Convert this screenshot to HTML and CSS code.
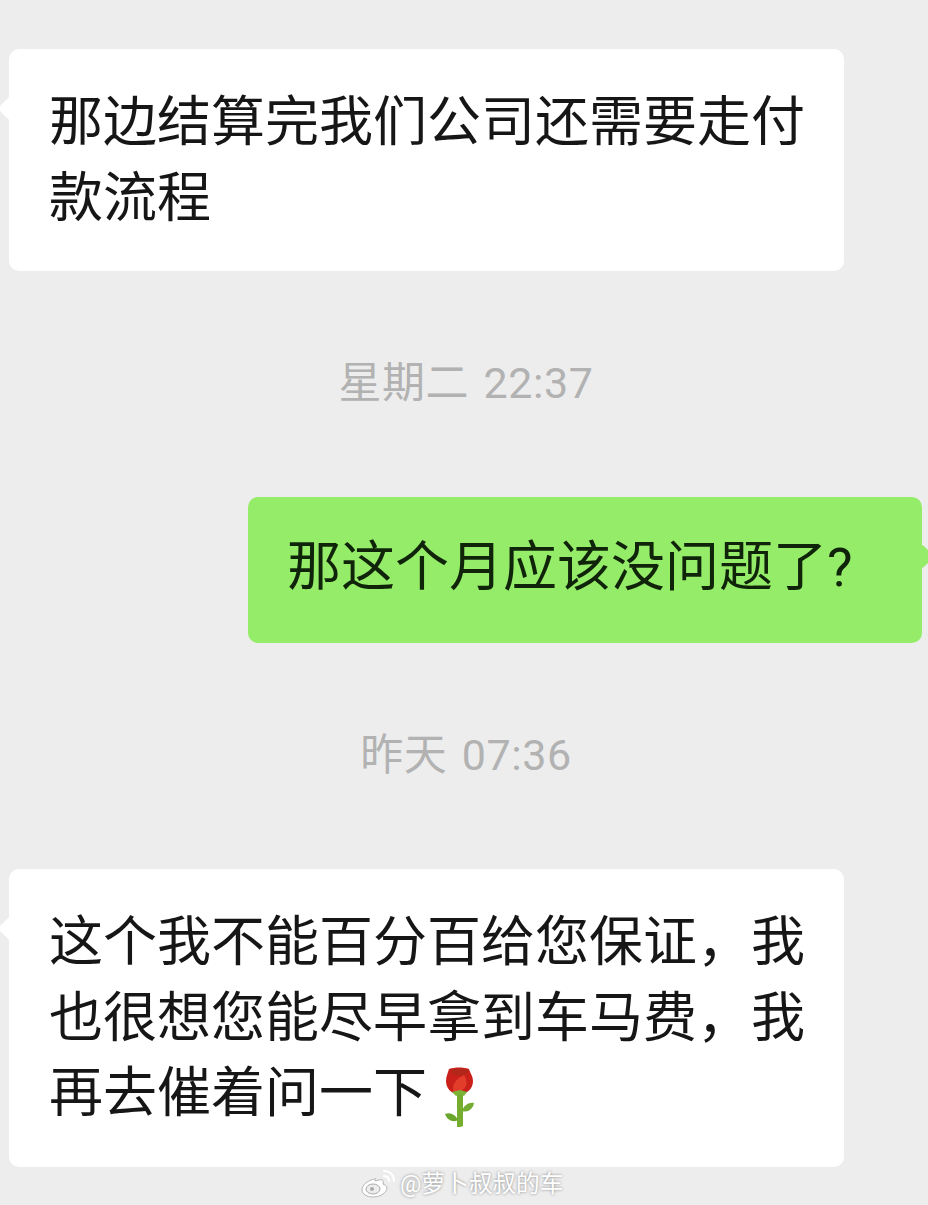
FILE: index.html
```html
<!DOCTYPE html>
<html lang="zh-CN">
<head>
    <meta charset="UTF-8">
    <meta name="viewport" content="width=device-width, initial-scale=1.0">
    <title>聊天记录</title>
    <link rel="stylesheet" href="styles.css">
</head>
<body>
    <div class="chat">
        <div class="row">
            <div class="bubble left">那边结算完我们公司还需要走付款流程</div>
        </div>

        <div class="time">星期二 22:37</div>

        <div class="row right-row">
            <div class="bubble right">那这个月应该没问题了?</div>
        </div>

        <div class="time">昨天 07:36</div>

        <div class="row">
            <div class="bubble left">这个我不能百分百给您保证&#xFF0C;我也很想您能尽早拿到车马费&#xFF0C;我再去催着问一下<svg class="rose" viewBox="0 0 30 60" aria-hidden="true">
                <path d="M12 27h6v32l-3 1h-3z" fill="#76ad2f"/>
                <path d="M13 53C10 47 5 45 0 47c2 6 8 9 13 6z" fill="#6aa52c"/>
                <path d="M17 44c2-6 7-9 12-8-1 6-6 10-12 8z" fill="#74ad31"/>
                <path d="M14 27C6 27 1 21 1 14 1 9 3 6 4 2c6-2 14-2 20 0 1 4 4 7 4 12 0 7-5 13-14 13z" fill="#c9201a"/>
                <path d="M5 3c5-2 13-2 18 0 1 3-3 5-7 6-4 0-10-2-11-6z" fill="#b3261a"/>
                <path d="M9 26C6 19 10 12 19 8c5 7 3 17-10 18z" fill="#e23c2a"/>
                <path d="M7 25l4 4 4-2 4 2 3-4-7-2z" fill="#7bb336"/>
            </svg></div>
        </div>
    </div>

    <!-- 水印 -->
    <div class="watermark">
        <svg class="weibo" viewBox="0 0 34 28" aria-hidden="true">
            <path d="M14 9C7 10 1 15 1 20c0 4 5 7 11 7 8 0 14-5 14-9 0-3-3-3-4-4 1-3 0-5-4-4l-4 1c1-2 1-3 0-2z" fill="#fff" stroke="#b5b5b5" stroke-width="1"/>
            <ellipse cx="12" cy="19" rx="7" ry="5" fill="#ededed" stroke="#a8a8a8"/>
            <circle cx="11" cy="19" r="2" fill="#a8a8a8"/>
            <path d="M23 6c3 0 5 2 5 5M23 1c6 0 10 4 10 10" fill="none" stroke="#fff" stroke-width="2" stroke-linecap="round"/>
        </svg>
        <span>@萝卜叔叔的车</span>
    </div>
</body>
</html>
```

FILE: styles.css
```css
/* Genel */
body {
    margin: 0;
    background-color: #ededed;
    font-family: Roboto, "Noto Sans CJK SC", sans-serif;
    color: #161616;
}

.chat {
    height: 1205px;
    padding-top: 49px;
    box-sizing: border-box;
    overflow: hidden;
}

.row {
    display: flex;
    padding-left: 9px;
}

.right-row {
    justify-content: flex-end;
    padding-left: 0;
    padding-right: 6px;
}

/* Baloncuk */
.bubble {
    position: relative;
    box-sizing: border-box;
    font-size: 54px;
    line-height: 75.5px;
    border-radius: 10px;
}

.bubble::before {
    content: "";
    position: absolute;
    top: 51px;
    width: 17px;
    height: 17px;
    transform: rotate(45deg);
    border-radius: 2px;
}

.left {
    width: 835px;
    padding: 36px 30px 35px 40px;
    background-color: #fff;
}

.left::before {
    left: -8.5px;
    background-color: #fff;
}

.right {
    width: 674px;
    padding: 33px 30px 37.5px 39px;
    background-color: #95ec69;
    color: #10240a;
}

.right::before {
    right: -8.5px;
    background-color: #95ec69;
}

.rose {
    width: 30px;
    height: 60px;
    margin-left: 18px;
    vertical-align: -15px;
}

/* Saat */
.time {
    font-size: 43px;
    line-height: 60px;
    text-align: center;
    color: #b2b2b2;
    margin: 82px 0 84px;
    padding-left: 4px;
    letter-spacing: 0.6px;
    word-spacing: 3px;
}

/* Filigran */
.watermark {
    position: absolute;
    left: 361px;
    top: 1168px;
    display: flex;
    align-items: center;
    gap: 5px;
    color: #fff;
    font-size: 23.7px;
    line-height: 32px;
    text-shadow: 0 0 3px rgba(0, 0, 0, 0.45);
}

.weibo {
    width: 34px;
    height: 28px;
}
```
